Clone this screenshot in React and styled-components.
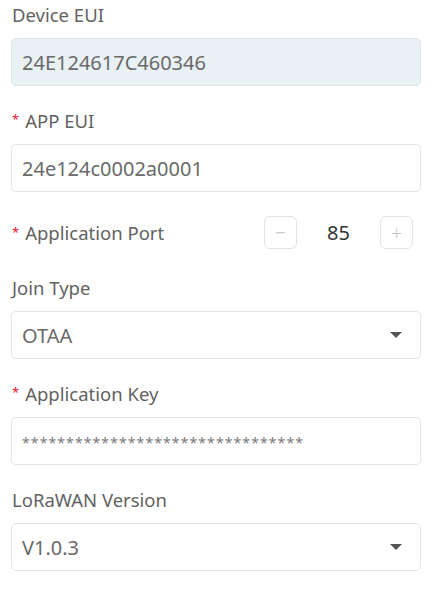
import styled, { createGlobalStyle } from "styled-components";

const GlobalStyle = createGlobalStyle`
  body {
    margin: 0;
    background: #fff;
    font-family: "Noto Sans", "Open Sans", sans-serif;
  }
`;

const Form = styled.div`
  display: flex;
  flex-direction: column;
  gap: 22px;
  padding: 2px 11px 0 11px;
`;

const Field = styled.div`
  display: flex;
  flex-direction: column;
  gap: 12px;
`;

const Label = styled.div`
  display: flex;
  align-items: center;
  height: 24px;
  font-size: 18.5px;
  color: #626262;
  padding-left: 1px;
`;

const Star = styled.span`
  color: #e0202a;
  font-size: 13px;
  margin-right: 6px;
  align-self: flex-start;
  line-height: 22px;
`;

const Box = styled.div`
  display: flex;
  align-items: center;
  justify-content: space-between;
  box-sizing: border-box;
  height: 48px;
  padding: 0 18px 0 10px;
  border: 1px solid ${(p) => (p.$disabled ? "#dce5ea" : "#e4e4e4")};
  border-radius: 5px;
  background: ${(p) => (p.$disabled ? "#e9f1f5" : "#fff")};
  font-size: 20px;
  color: #6a6a6a;
`;

const Masked = styled.span`
  font-size: 14px;
  color: #7a7a7a;
  letter-spacing: 1.1px;
  padding-top: 2px;
`;

const Caret = styled.span`
  width: 0;
  height: 0;
  border-left: 6px solid transparent;
  border-right: 6px solid transparent;
  border-top: 6px solid #555;
`;

const PortRow = styled.div`
  display: flex;
  align-items: center;
  justify-content: space-between;
  padding: 2px 8px 4px 0;
`;

const Stepper = styled.div`
  display: flex;
  align-items: center;
`;

const StepButton = styled.div`
  display: flex;
  align-items: center;
  justify-content: center;
  box-sizing: border-box;
  width: 33px;
  height: 33px;
  border: 1px solid #e2e2e2;
  border-radius: 6px;
  color: #c4c4c4;
  font-size: 20px;
  font-weight: 300;
`;

const StepValue = styled.div`
  width: 83px;
  text-align: center;
  font-size: 20px;
  color: #333;
`;

const SelectField = ({ label, value, required }) => (
  <Field>
    <Label>
      {required && <Star>*</Star>}
      {label}
    </Label>
    <Box>
      <span>{value}</span>
      <Caret />
    </Box>
  </Field>
);

export default function App() {
  return (
    <>
      <GlobalStyle />
      <Form>
        <Field>
          <Label>Device EUI</Label>
          <Box $disabled>24E124617C460346</Box>
        </Field>
        <Field>
          <Label>
            <Star>*</Star>APP EUI
          </Label>
          <Box>24e124c0002a0001</Box>
        </Field>
        <PortRow>
          <Label>
            <Star>*</Star>Application Port
          </Label>
          <Stepper>
            <StepButton>−</StepButton>
            <StepValue>85</StepValue>
            <StepButton>+</StepButton>
          </Stepper>
        </PortRow>
        <SelectField label="Join Type" value="OTAA" />
        <Field>
          <Label>
            <Star>*</Star>Application Key
          </Label>
          <Box>
            <Masked>********************************</Masked>
          </Box>
        </Field>
        <SelectField label="LoRaWAN Version" value="V1.0.3" />
      </Form>
    </>
  );
}
